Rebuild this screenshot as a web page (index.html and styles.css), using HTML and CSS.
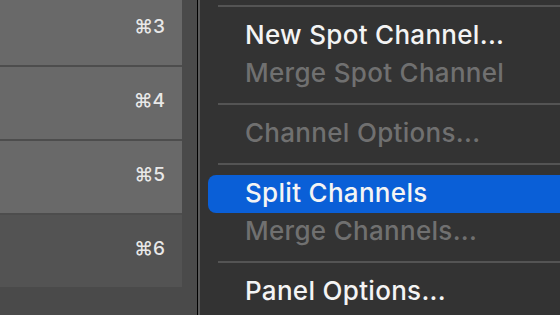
FILE: index.html
```html
<!DOCTYPE html>
<html>
  <head>
    <title>Channels Panel Menu</title>
    <link rel="stylesheet" href="styles.css">
  </head>

  <body>
    <div id="channels">
      <ul id="channel-list">
        <li class="channel first"><span class="shortcut">⌘3</span></li>
        <li class="channel"><span class="shortcut">⌘4</span></li>
        <li class="channel"><span class="shortcut">⌘5</span></li>
        <li class="channel dim"><span class="shortcut">⌘6</span></li>
      </ul>
    </div>

    <div id="divider"></div>

    <div id="menu">
      <hr class="separator top">
      <div class="item">New Spot Channel...</div>
      <div class="item disabled">Merge Spot Channel</div>
      <hr class="separator">
      <div class="item disabled">Channel Options...</div>
      <hr class="separator">
      <div class="item selected">Split Channels</div>
      <div class="item disabled">Merge Channels...</div>
      <hr class="separator">
      <div class="item">Panel Options...</div>
    </div>
  </body>
</html>
```

FILE: styles.css
```css
* {
  box-sizing: border-box;
}

body {
  margin: 0;
  height: 315px;
  overflow: hidden;
  display: flex;
  background-color: #333333;
  font-family: 'Inter', 'DejaVu Sans', sans-serif;
}

#channels {
  width: 197px;
  flex-shrink: 0;
  background-color: #4a4a4a;
}

#channel-list {
  list-style: none;
  margin: 0;
  padding: 0;
  width: 182px;
}

.channel {
  height: 74px;
  display: flex;
  justify-content: flex-end;
  align-items: flex-end;
  padding: 0 17px 28px 0;
  background-color: #696969;
  border-bottom: 2px solid #4d4d4d;
}

.channel.first {
  height: 67px;
}

.channel.dim {
  background-color: #535353;
  border-bottom: none;
  height: 72px;
}

.shortcut {
  color: #e8e8e8;
  font-size: 19px;
  font-weight: 500;
  line-height: 20px;
}

#divider {
  width: 3px;
  flex-shrink: 0;
  border-left: 1px solid #000000;
  background-color: #5a5a5a;
}

#menu {
  flex: 1;
  background-color: #333333;
}

.separator {
  border: none;
  height: 2px;
  margin: 10px 0 10px 18px;
  background-color: #545454;
}

.separator.top {
  margin-top: 5px;
}

.item {
  height: 38px;
  margin-left: 8px;
  padding: 0 0 0 37px;
  font-size: 26px;
  font-weight: 500;
  letter-spacing: 0.3px;
  line-height: 36px;
  color: #f4f4f4;
  white-space: nowrap;
}

.item.disabled {
  color: #707070;
}

.item.selected {
  border-radius: 8px 0 0 8px;
  background-color: #0a5fd7;
  color: #f4f4f4;
}
```
